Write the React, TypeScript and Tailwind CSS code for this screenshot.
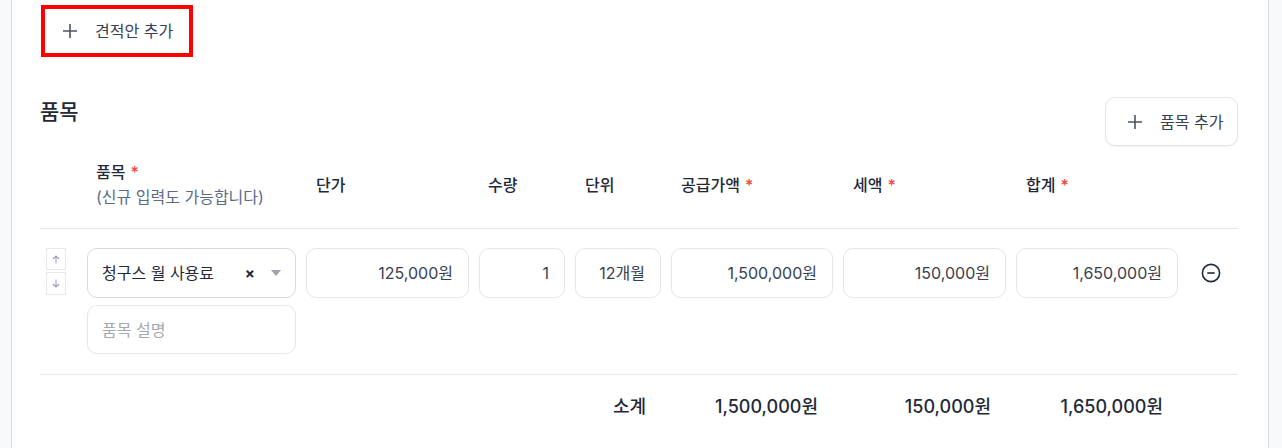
import React from "react";

const FONT = { fontFamily: 'Inter, "Noto Sans CJK KR", sans-serif' };

function Plus() {
  return (
    <svg width="16" height="16" viewBox="0 0 16 16" fill="none" stroke="#4b5563" strokeWidth="1.6" strokeLinecap="butt">
      <path d="M8 1v14M1 8h14" />
    </svg>
  );
}

function Req() {
  return <span className="ml-[5px] text-[#ef4444]">*</span>;
}

function Field({ children, className = "" }: { children: React.ReactNode; className?: string }) {
  return (
    <div
      className={
        "flex h-[50px] items-center justify-end rounded-[10px] border border-[#e3e5e8] bg-white pr-[15px] text-[16px] text-[#374151] " +
        className
      }
    >
      {children}
    </div>
  );
}

const GRID =
  "grid grid-cols-[37px_209px_163px_86px_86px_162px_163px_162px_1fr] gap-x-[10px]";

export default function App() {
  return (
    <div style={FONT} className="min-h-[448px] bg-[#f8f9fb] pl-[11px] pr-[13px]">
      <div className="min-h-[448px] border-x border-[#d5d9e0] bg-white pl-[28px] pr-[30px] pt-[5px]">
        {/* 견적안 추가 */}
        <div className="ml-[1px] flex">
          <button className="flex h-[52px] w-[152px] items-center gap-[17px] border-4 border-[#ff0000] bg-white pl-[17px] text-[16px] text-[#374151]">
            <Plus />
            <span className="whitespace-nowrap">견적안 추가</span>
          </button>
        </div>

        {/* 품목 heading */}
        <div className="mt-[40px] flex items-start justify-between">
          <h2 className="text-[21px] font-medium leading-[30px] text-[#1f2937]">품목</h2>
          <button className="flex h-[49px] w-[133px] items-center gap-[17px] rounded-[10px] border border-[#e3e5e8] bg-white pl-[21px] text-[16px] text-[#374151] shadow-[0_1px_2px_rgba(0,0,0,0.06)]">
            <Plus />
            <span className="whitespace-nowrap">품목 추가</span>
          </button>
        </div>

        {/* header */}
        <div className={GRID + " items-center border-b border-[#e5e7eb] pb-[18px] pt-[14px] text-[16px] font-medium text-[#1f2937]"}>
          <div />
          <div className="whitespace-nowrap pl-[9px] leading-[25px]">
            <div>
              품목
              <Req />
            </div>
            <div className="font-normal text-[#5b6b86]">(신규 입력도 가능합니다)</div>
          </div>
          <div className="pl-[10px]">단가</div>
          <div className="pl-[9px]">수량</div>
          <div className="pl-[10px]">단위</div>
          <div className="whitespace-nowrap pl-[10px]">
            공급가액
            <Req />
          </div>
          <div className="pl-[10px]">
            세액
            <Req />
          </div>
          <div className="pl-[10px]">
            합계
            <Req />
          </div>
          <div />
        </div>

        {/* item row */}
        <div className={GRID + " items-start border-b border-[#e5e7eb] pb-[20px] pt-[19px]"}>
          <div className="flex flex-col items-end gap-[2px] pr-[11px]">
            <button className="flex h-[22px] w-[20px] items-center justify-center border border-[#e5e7eb] bg-white">
              <svg width="8" height="9" viewBox="0 0 8 9" fill="none" stroke="#9ca3af" strokeWidth="1.1">
                <path d="M4 8.5V1M1 4l3-3 3 3" />
              </svg>
            </button>
            <button className="flex h-[23px] w-[20px] items-center justify-center border border-[#e5e7eb] bg-white">
              <svg width="8" height="9" viewBox="0 0 8 9" fill="none" stroke="#9ca3af" strokeWidth="1.1">
                <path d="M4 0.5V8M1 5l3 3 3-3" />
              </svg>
            </button>
          </div>
          <div className="flex flex-col gap-[7px]">
            <div className="flex h-[50px] items-center rounded-[10px] border border-[#d6d9de] bg-white pl-[14px] pr-[14px] text-[16px] text-[#1f2937]">
              <span className="flex-1 whitespace-nowrap">청구스 월 사용료</span>
              <span className="mr-[16px] text-[15px] font-bold leading-none text-[#1f2937]">×</span>
              <svg width="10" height="6" viewBox="0 0 10 6">
                <path d="M0 0h10L5 6z" fill="#9ca3af" />
              </svg>
            </div>
            <div className="flex h-[49px] items-center rounded-[10px] border border-[#e3e5e8] bg-white pl-[14px] text-[16px] text-[#a3a8b0]">
              품목 설명
            </div>
          </div>
          <Field>125,000원</Field>
          <Field>1</Field>
          <Field>12개월</Field>
          <Field>1,500,000원</Field>
          <Field>150,000원</Field>
          <Field>1,650,000원</Field>
          <div className="flex h-[50px] items-center justify-center pr-[4px]">
            <svg width="20" height="20" viewBox="0 0 20 20" fill="none" stroke="#1f2937" strokeWidth="1.6">
              <circle cx="10" cy="10" r="8.6" />
              <path d="M6.3 10h7.4" />
            </svg>
          </div>
        </div>

        {/* subtotal */}
        <div className={GRID + " pt-[19px] text-[18px] font-medium leading-[26px] text-[#1f2937]"}>
          <div />
          <div />
          <div />
          <div />
          <div className="whitespace-nowrap pr-[15px] text-right">소계</div>
          <div className="whitespace-nowrap pr-[15px] text-right">1,500,000원</div>
          <div className="whitespace-nowrap pr-[15px] text-right">150,000원</div>
          <div className="whitespace-nowrap pr-[15px] text-right">1,650,000원</div>
          <div />
        </div>
      </div>
    </div>
  );
}
